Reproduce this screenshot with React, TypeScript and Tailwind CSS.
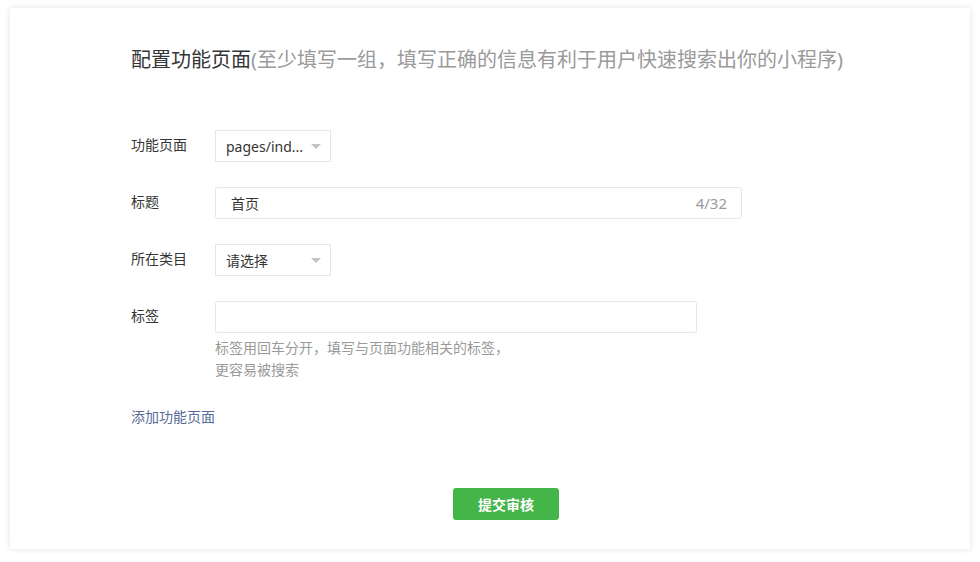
import React from "react";

const FONT = { fontFamily: "'Noto Sans', 'Noto Sans CJK SC', sans-serif" };

function Caret() {
  return (
    <span className="ml-auto h-0 w-0 border-x-[5px] border-t-[5px] border-x-transparent border-t-[#c4c4c4]" />
  );
}

function Row({ label, children }: { label: string; children: React.ReactNode }) {
  return (
    <div className="flex items-start">
      <div className="w-[84px] shrink-0 pt-[5px] text-[14px] leading-[20px] text-[#353535]">{label}</div>
      <div>{children}</div>
    </div>
  );
}

export default function App() {
  return (
    <div className="h-[562px] w-[980px] bg-white pl-[10px] pt-[8px]" style={FONT}>
      <div className="flex h-[541px] w-[960px] flex-col bg-white pl-[121px] shadow-[0_0_6px_rgba(0,0,0,0.12)]">
        <h1 className="mt-[38px] text-[20px] leading-[28px] text-[#353535]">
          配置功能页面<span className="text-[#9a9a9a]">(至少填写一组，填写正确的信息有利于用户快速搜索出你的小程序)</span>
        </h1>

        <div className="mt-[56px] flex flex-col gap-[25px]">
          <Row label="功能页面">
            <div className="flex h-[32px] w-[116px] items-center border border-[#e7e7eb] pl-[10px] pr-[9px] text-[14px] text-[#353535]">
              pages/ind...
              <Caret />
            </div>
          </Row>
          <Row label="标题">
            <div className="flex h-[32px] w-[527px] items-center rounded-[3px] border border-[#e7e7eb] pl-[15px] pr-[14px] text-[14px] text-[#353535]">
              首页
              <span className="ml-auto text-[15px] text-[#9a9a9a]">4/32</span>
            </div>
          </Row>
          <Row label="所在类目">
            <div className="flex h-[32px] w-[116px] items-center border border-[#e7e7eb] pl-[10px] pr-[9px] text-[14px] text-[#353535]">
              请选择
              <Caret />
            </div>
          </Row>
          <Row label="标签">
            <div className="h-[32px] w-[482px] rounded-[3px] border border-[#e7e7eb]" />
            <p className="mt-[4px] text-[14px] leading-[22px] text-[#9a9a9a]">
              标签用回车分开，填写与页面功能相关的标签，
              <br />
              更容易被搜索
            </p>
          </Row>
        </div>

        <a className="mt-[26px] text-[14px] leading-[20px] text-[#576b95]">添加功能页面</a>

        <div className="mt-[61px] flex w-[750px] justify-center">
          <button className="h-[32px] w-[106px] rounded-[3px] bg-[#44b549] text-[14px] font-bold text-white">
            提交审核
          </button>
        </div>
      </div>
    </div>
  );
}
